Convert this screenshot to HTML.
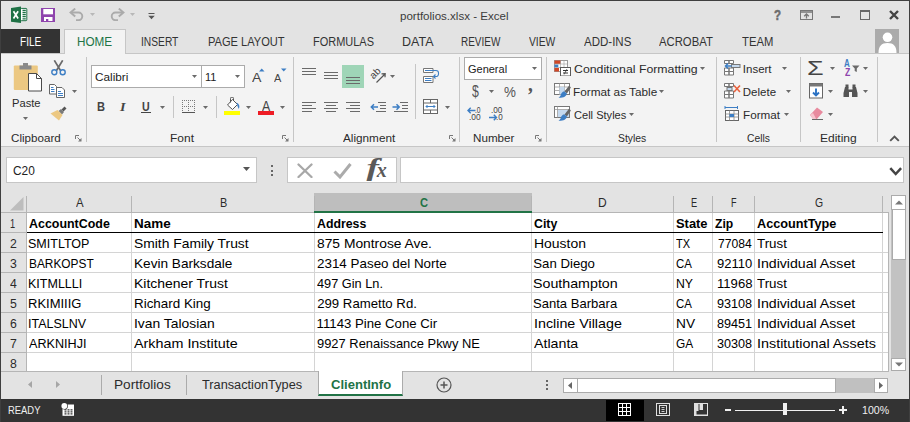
<!DOCTYPE html><html><head><meta charset="utf-8"><title>portfolios.xlsx - Excel</title><style>html,body{margin:0;padding:0}body{width:910px;height:422px;overflow:hidden;position:relative;background:#e3e3e3;font-family:"Liberation Sans", sans-serif}div,svg,span{position:absolute;box-sizing:border-box}span{white-space:pre;line-height:24px;transform-origin:0 0}</style></head><body>
<svg style="left:11px;top:6px" width="17" height="18" viewBox="0 0 17 18"><rect x="9.500" y="2.400" width="6.300" height="12.300" rx="0.800" fill="#fff" stroke="#1e7145" stroke-width="1"/>
<path d="M11.500 4.300h3.300M11.500 6.500h3.300M11.500 8.600h3.300M11.500 10.700h3.300M11.500 12.800h3.300" stroke="#1e7145" stroke-width="1.300"/>
<path d="M0 1.900L10 0.600v16.500L0 15.800z" fill="#1e7145"/>
<path d="M2.500 5.300l4.600 7.200M7.100 5.300l-4.600 7.200" stroke="#fff" stroke-width="1.700"/></svg>
<svg style="left:41px;top:8px" width="14" height="14" viewBox="0 0 14 14"><path d="M0 0h14v14H0z" fill="#8f44ad"/><rect x="2.300" y="1" width="9.700" height="5.300" fill="#fff"/><rect x="3" y="9" width="8.500" height="4" fill="#fff"/><rect x="5" y="11" width="2.300" height="2" fill="#8f44ad"/></svg>
<svg style="left:69px;top:8px" width="16" height="13" viewBox="0 0 16 13"><path d="M2 4.500h7.500a3.800 3.800 0 0 1 0 7.600h-2.500" fill="none" stroke="#ababab" stroke-width="1.900"/><path d="M6.200 0.600L1.600 4.500l4.600 3.900" fill="none" stroke="#ababab" stroke-width="2"/></svg>
<svg style="left:90px;top:13px" width="5" height="3" viewBox="0 0 5 3"><path d="M0 0h5L2.500 3z" fill="#b8b8b8"/></svg>
<svg style="left:109px;top:8px" width="16" height="13" viewBox="0 0 16 13"><path d="M14 4.500h-7.500a3.800 3.800 0 0 0 0 7.600h2.500" fill="none" stroke="#ababab" stroke-width="1.900"/><path d="M9.800 0.600l4.600 3.900-4.600 3.900" fill="none" stroke="#ababab" stroke-width="2"/></svg>
<svg style="left:130px;top:13px" width="5" height="3" viewBox="0 0 5 3"><path d="M0 0h5L2.500 3z" fill="#b8b8b8"/></svg>
<svg style="left:148px;top:12px" width="7" height="8" viewBox="0 0 7 8"><path d="M0.500 1.500h6" stroke="#555" stroke-width="1"/><path d="M0.300 3.800h6.400L3.500 7.200z" fill="#555"/></svg>
<svg style="left:800px;top:10px" width="13" height="10" viewBox="0 0 13 10"><rect x="0.500" y="0.500" width="12" height="9" fill="none" stroke="#777"/><path d="M0.500 2h12" stroke="#777" stroke-width="1.500"/><path d="M6.500 8.500v-4.500M4.200 6.300L6.500 4l2.300 2.300" fill="none" stroke="#777" stroke-width="1.300"/></svg>
<div style="left:831px;top:16px;width:9px;height:2px;background:#777;"></div>
<svg style="left:860px;top:10px" width="10" height="10" viewBox="0 0 10 10"><rect x="0.500" y="1" width="9" height="8.500" fill="none" stroke="#666"/><path d="M0 1h10" stroke="#666" stroke-width="2"/></svg>
<svg style="left:889px;top:10px" width="10" height="10" viewBox="0 0 10 10"><path d="M1 1l8 8M9 1l-8 8" stroke="#444" stroke-width="2.400"/></svg>
<div style="left:1px;top:29px;width:59px;height:25px;background:#333;"></div>
<div style="left:0px;top:53px;width:910px;height:1px;background:#c6c6c6;"></div>
<div style="left:64px;top:29px;width:62px;height:25px;background:#f3f3f3;border:1px solid #c6c6c6;border-bottom:none"></div>
<div style="left:875px;top:29px;width:24px;height:24px;background:#ababab;"></div>
<svg style="left:875px;top:29px" width="24" height="24" viewBox="0 0 24 24"><circle cx="12.500" cy="8.300" r="4.800" fill="#fff"/><path d="M3.500 24c0-7 3-10 9-10s9 3 9 10z" fill="#fff"/></svg>
<div style="left:1px;top:54px;width:909px;height:92px;background:#f3f3f3;"></div>
<div style="left:0px;top:146px;width:910px;height:1px;background:#c6c6c6;"></div>
<div style="left:86px;top:57px;width:1px;height:85px;background:#c6c6c6;"></div>
<div style="left:293px;top:57px;width:1px;height:85px;background:#c6c6c6;"></div>
<div style="left:415px;top:64px;width:1px;height:55px;background:#c6c6c6;"></div>
<div style="left:459px;top:57px;width:1px;height:85px;background:#c6c6c6;"></div>
<div style="left:546px;top:57px;width:1px;height:85px;background:#c6c6c6;"></div>
<div style="left:716px;top:57px;width:1px;height:85px;background:#c6c6c6;"></div>
<div style="left:800px;top:57px;width:1px;height:85px;background:#c6c6c6;"></div>
<div style="left:877px;top:57px;width:1px;height:85px;background:#c6c6c6;"></div>
<svg style="left:75px;top:135px" width="7" height="7" viewBox="0 0 7 7"><path d="M0.500 4V0.500H4" fill="none" stroke="#777"/><path d="M2.500 2.500l3 3" stroke="#777"/><path d="M6.500 3v3.500H3z" fill="#777"/></svg>
<svg style="left:282px;top:135px" width="7" height="7" viewBox="0 0 7 7"><path d="M0.500 4V0.500H4" fill="none" stroke="#777"/><path d="M2.500 2.500l3 3" stroke="#777"/><path d="M6.500 3v3.500H3z" fill="#777"/></svg>
<svg style="left:449px;top:135px" width="7" height="7" viewBox="0 0 7 7"><path d="M0.500 4V0.500H4" fill="none" stroke="#777"/><path d="M2.500 2.500l3 3" stroke="#777"/><path d="M6.500 3v3.500H3z" fill="#777"/></svg>
<svg style="left:535px;top:135px" width="7" height="7" viewBox="0 0 7 7"><path d="M0.500 4V0.500H4" fill="none" stroke="#777"/><path d="M2.500 2.500l3 3" stroke="#777"/><path d="M6.500 3v3.500H3z" fill="#777"/></svg>
<svg style="left:13px;top:62px" width="30" height="30" viewBox="0 0 30 30"><rect x="0.800" y="3.600" width="24" height="24.400" rx="1" fill="#ecc882"/>
<path d="M6.500 7.500v-4h3.500v-2.500h5v2.500h3.500v4z" fill="#8a8a8a"/>
<path d="M15.500 11.500h8l5 5v12.500h-13z" fill="#fff" stroke="#4a4a4a"/><path d="M23.500 11.500v5h5" fill="none" stroke="#4a4a4a"/></svg>
<svg style="left:23px;top:117px" width="5" height="3" viewBox="0 0 5 3"><path d="M0 0h5L2.500 3z" fill="#6a6a6a"/></svg>
<svg style="left:51px;top:60px" width="15" height="16" viewBox="0 0 15 16"><path d="M3.300 0.300l6.200 10.200M11.700 0.300l-6.200 10.200" stroke="#6a6a6a" stroke-width="1.700"/>
<circle cx="3.300" cy="12.300" r="2.500" fill="none" stroke="#3d7ec4" stroke-width="1.400"/><circle cx="11.700" cy="12.300" r="2.500" fill="none" stroke="#3d7ec4" stroke-width="1.400"/></svg>
<svg style="left:49px;top:84px" width="17" height="14" viewBox="0 0 17 14"><path d="M0.500 0.500h5l2 2v7.500h-7z" fill="#fff" stroke="#666"/><path d="M2 3.500h2.500M2 5.500h3.500M2 7.500h3.500" stroke="#3d7ec4"/>
<path d="M7.500 3.500h5.500l2.500 2.500v7.500h-8z" fill="#fff" stroke="#666"/><path d="M9 7.500h3M9 9.500h5M9 11.500h5" stroke="#3d7ec4"/></svg>
<svg style="left:72px;top:90px" width="5" height="3" viewBox="0 0 5 3"><path d="M0 0h5L2.500 3z" fill="#6a6a6a"/></svg>
<svg style="left:50px;top:106px" width="17" height="15" viewBox="0 0 17 15"><path d="M11.500 3.500l3-3 2 2-3 3z" fill="#555"/><path d="M8.500 5l2.500-2 3 3-2 2.500z" fill="#7a7a7a"/><path d="M0.500 7.500l7-3.500 5 5-3.500 5.500z" fill="#ecc882"/></svg>
<div style="left:91px;top:65px;width:154px;height:23px;background:#fff;border:1px solid #ababab"></div>
<div style="left:201px;top:65px;width:1px;height:23px;background:#ababab;"></div>
<svg style="left:192px;top:75px" width="5" height="3" viewBox="0 0 5 3"><path d="M0 0h5L2.500 3z" fill="#6a6a6a"/></svg>
<svg style="left:235px;top:75px" width="5" height="3" viewBox="0 0 5 3"><path d="M0 0h5L2.500 3z" fill="#6a6a6a"/></svg>
<svg style="left:259px;top:68px" width="6" height="4" viewBox="0 0 6 4"><path d="M0 3.500h5.500L2.750 0.500z" fill="#3d7ec4"/></svg>
<svg style="left:281px;top:68px" width="6" height="4" viewBox="0 0 6 4"><path d="M0 0.500h5.500L2.750 3.500z" fill="#3d7ec4"/></svg>
<div style="left:141px;top:112px;width:10px;height:1px;background:#444;"></div>
<svg style="left:160px;top:106px" width="5" height="3" viewBox="0 0 5 3"><path d="M0 0h5L2.500 3z" fill="#6a6a6a"/></svg>
<div style="left:173px;top:96px;width:1px;height:22px;background:#c6c6c6;"></div>
<svg style="left:182px;top:100px" width="14" height="14" viewBox="0 0 14 14"><path d="M0.500 0v12M6.500 0v12M12.500 0v12M0 0.500h13M0 6.500h13" stroke="#7a7a7a" stroke-dasharray="1 1"/><path d="M0 12.500h13" stroke="#555"/></svg>
<svg style="left:203px;top:106px" width="5" height="3" viewBox="0 0 5 3"><path d="M0 0h5L2.500 3z" fill="#6a6a6a"/></svg>
<div style="left:216px;top:96px;width:1px;height:22px;background:#c6c6c6;"></div>
<svg style="left:224px;top:97px" width="17" height="18" viewBox="0 0 17 18"><rect x="0" y="14" width="16" height="4" fill="#ffff00"/>
<path d="M3.500 8l5-5.500 5 5-5 5z" fill="#fff" stroke="#555"/><path d="M6.500 5.500V1.500a1.500 1.500 0 0 1 3 0V3" fill="none" stroke="#555"/><path d="M12.500 5.500c2.800 1.200 3.600 3.800 2.300 6.500-0.800-1.500-1.500-3-2.300-6.500z" fill="#3d7ec4"/></svg>
<svg style="left:246px;top:106px" width="5" height="3" viewBox="0 0 5 3"><path d="M0 0h5L2.500 3z" fill="#6a6a6a"/></svg>
<div style="left:258px;top:111px;width:16px;height:4px;background:#ee1c25;"></div>
<svg style="left:280px;top:106px" width="5" height="3" viewBox="0 0 5 3"><path d="M0 0h5L2.500 3z" fill="#6a6a6a"/></svg>
<svg style="left:302px;top:68px" width="14" height="9" viewBox="0 0 14 9"><rect x="0" y="0" width="14" height="1" fill="#6a6a6a"/><rect x="0" y="3" width="14" height="1" fill="#6a6a6a"/><rect x="0" y="6" width="14" height="1" fill="#6a6a6a"/></svg>
<svg style="left:324px;top:72px" width="14" height="9" viewBox="0 0 14 9"><rect x="0" y="0" width="14" height="1" fill="#6a6a6a"/><rect x="0" y="3" width="14" height="1" fill="#6a6a6a"/><rect x="0" y="6" width="14" height="1" fill="#6a6a6a"/></svg>
<div style="left:342px;top:65px;width:22px;height:23px;background:#9fd5b7;"></div>
<svg style="left:346px;top:77px" width="14" height="9" viewBox="0 0 14 9"><rect x="0" y="0" width="14" height="1" fill="#6a6a6a"/><rect x="0" y="3" width="14" height="1" fill="#6a6a6a"/><rect x="0" y="6" width="14" height="1" fill="#6a6a6a"/></svg>
<svg style="left:368px;top:66px" width="20" height="20" viewBox="0 0 20 20"><path d="M8.500 16.500L17 8M13.500 7.800l3.700-0.200-0.200 3.700" fill="none" stroke="#555" stroke-width="1.200"/><text x="0" y="0" transform="translate(5.500 13.500) rotate(-45)" font-family="Liberation Sans, sans-serif" font-size="10" fill="#444">ab</text></svg>
<svg style="left:390px;top:75px" width="5" height="3" viewBox="0 0 5 3"><path d="M0 0h5L2.500 3z" fill="#6a6a6a"/></svg>
<svg style="left:423px;top:68px" width="17" height="15" viewBox="0 0 17 15"><path d="M0.500 0.500h9.500v4h-9.500zM0.500 8.500h9.500v6h-9.500z" fill="#fff" stroke="#777"/><path d="M2 2.500h9.500M2 10.500h6.500M2 12.500h6.500" stroke="#3d7ec4"/><path d="M11 2.500h2a2.500 2.500 0 0 1 2.500 2.500v1a2.500 2.500 0 0 1-2.500 2.500h-2M12.500 6.500l-2 2 2 2" fill="none" stroke="#3d7ec4" stroke-width="1.100"/></svg>
<svg style="left:302px;top:102px" width="14" height="12" viewBox="0 0 14 12"><rect x="0" y="0" width="14" height="1" fill="#6a6a6a"/><rect x="0" y="3" width="10" height="1" fill="#6a6a6a"/><rect x="0" y="6" width="14" height="1" fill="#6a6a6a"/><rect x="0" y="9" width="10" height="1" fill="#6a6a6a"/></svg>
<svg style="left:324px;top:102px" width="14" height="12" viewBox="0 0 14 12"><rect x="0.0" y="0" width="14" height="1" fill="#6a6a6a"/><rect x="2.0" y="3" width="10" height="1" fill="#6a6a6a"/><rect x="0.0" y="6" width="14" height="1" fill="#6a6a6a"/><rect x="2.0" y="9" width="10" height="1" fill="#6a6a6a"/></svg>
<svg style="left:346px;top:102px" width="14" height="12" viewBox="0 0 14 12"><rect x="0" y="0" width="14" height="1" fill="#6a6a6a"/><rect x="4" y="3" width="10" height="1" fill="#6a6a6a"/><rect x="0" y="6" width="14" height="1" fill="#6a6a6a"/><rect x="4" y="9" width="10" height="1" fill="#6a6a6a"/></svg>
<svg style="left:370px;top:102px" width="16" height="10" viewBox="0 0 16 10"><path d="M8 0.500h8M10 3.500h6M10 6.500h6M6 9.500h10" stroke="#6a6a6a"/><path d="M8 5H1.500M4 2.300L1.300 5 4 7.700" fill="none" stroke="#3d7ec4" stroke-width="1.500"/></svg>
<svg style="left:392px;top:102px" width="16" height="10" viewBox="0 0 16 10"><path d="M8 0.500h8M10 3.500h6M10 6.500h6M2 9.500h14" stroke="#6a6a6a"/><path d="M0.500 5H7M4.500 2.300L7.200 5 4.500 7.700" fill="none" stroke="#3d7ec4" stroke-width="1.500"/></svg>
<svg style="left:423px;top:99px" width="15" height="15" viewBox="0 0 15 15"><rect x="0.500" y="0.500" width="14" height="14" fill="#fff" stroke="#666"/><path d="M0.500 4h14M0.500 11h14M7.500 0.500v3.500M7.500 11v3.500" stroke="#666"/><path d="M3 7.500h9M4.500 6L3 7.500 4.500 9M10.500 6l1.500 1.500L10.500 9" fill="none" stroke="#3d7ec4"/></svg>
<svg style="left:445px;top:106px" width="5" height="3" viewBox="0 0 5 3"><path d="M0 0h5L2.500 3z" fill="#6a6a6a"/></svg>
<div style="left:464px;top:57px;width:78px;height:23px;background:#fff;border:1px solid #ababab"></div>
<svg style="left:532px;top:67px" width="5" height="3" viewBox="0 0 5 3"><path d="M0 0h5L2.500 3z" fill="#6a6a6a"/></svg>
<svg style="left:489px;top:90px" width="5" height="3" viewBox="0 0 5 3"><path d="M0 0h5L2.500 3z" fill="#6a6a6a"/></svg>
<svg style="left:467px;top:106.5px" width="9" height="7" viewBox="0 0 9 7"><path d="M8.500 3.500H1M3.700 0.800L1 3.500l2.700 2.700" fill="none" stroke="#3d7ec4" stroke-width="1.400"/></svg>
<svg style="left:489px;top:114px" width="9" height="7" viewBox="0 0 9 7"><path d="M0 3.500h7.500M4.800 0.800L7.500 3.500 4.800 6.200" fill="none" stroke="#3d7ec4" stroke-width="1.400"/></svg>
<svg style="left:554px;top:60px" width="17" height="16" viewBox="0 0 17 16"><rect x="0.500" y="0.500" width="13" height="11" fill="#fff" stroke="#999"/><rect x="0.500" y="0.500" width="6.500" height="3.500" fill="#d24726"/><rect x="0.500" y="4.500" width="3.800" height="3" fill="#3d7ec4"/><rect x="0.500" y="8" width="4.500" height="3.500" fill="#d24726"/><path d="M6.500 0.500v11M10 0.500v11M0.500 4h13M0.500 7.500h13" stroke="#aaa" stroke-width="0.700"/>
<rect x="6.500" y="7.500" width="10" height="8.500" fill="#fff" stroke="#5a5a5a"/><path d="M9 10.500h5M9 13h5" stroke="#333" stroke-width="1"/><path d="M12.800 9.200l-2.600 5.200" stroke="#333" stroke-width="0.800"/></svg>
<svg style="left:700px;top:67px" width="5" height="3" viewBox="0 0 5 3"><path d="M0 0h5L2.500 3z" fill="#6a6a6a"/></svg>
<svg style="left:554px;top:83px" width="17" height="17" viewBox="0 0 17 17"><rect x="0.500" y="0.500" width="15" height="11" fill="#fff" stroke="#777"/><path d="M0.500 4h15M0.500 7.500h15M5.500 0.500v11M10.500 0.500v11" stroke="#999" stroke-width="0.800"/><rect x="5.500" y="4" width="5" height="7.500" fill="#c5d9ee"/><path d="M15.200 2.600l1.700 1.800-4 6-2.400-1.800z" fill="#666"/><path d="M10.500 8.600l2.400 1.800c-0.300 2.600-3.500 4.600-8.400 4.400 2-1.200 2.300-2.800 2.800-4.200 0.900-1.600 2.100-2.200 3.200-2z" fill="#3d7ec4"/></svg>
<svg style="left:659px;top:90px" width="5" height="3" viewBox="0 0 5 3"><path d="M0 0h5L2.500 3z" fill="#6a6a6a"/></svg>
<svg style="left:554px;top:106px" width="17" height="17" viewBox="0 0 17 17"><rect x="0.500" y="0.500" width="15" height="11" fill="#fff" stroke="#777"/><path d="M0.500 3.500h15M3.500 0.500v11" stroke="#999" stroke-width="0.800"/><rect x="4" y="4" width="11" height="7" fill="#c5d9ee"/><path d="M15.200 2.600l1.700 1.800-4 6-2.400-1.800z" fill="#666"/><path d="M10.500 8.600l2.400 1.800c-0.300 2.600-3.500 4.600-8.400 4.400 2-1.200 2.300-2.800 2.800-4.200 0.900-1.600 2.100-2.200 3.200-2z" fill="#3d7ec4"/></svg>
<svg style="left:629px;top:113px" width="5" height="3" viewBox="0 0 5 3"><path d="M0 0h5L2.500 3z" fill="#6a6a6a"/></svg>
<svg style="left:724px;top:60px" width="17" height="16" viewBox="0 0 17 16"><path d="M0.500 0.500h4.500v3h-4.500zM5 0.500h4.500v3H5zM0.500 8h4.500v3.500h-4.500zM5 8h4.500v3.500H5zM0.500 11.500h4.500v3.500h-4.500zM5 11.500h4.500v3.500H5z" fill="#fff" stroke="#777"/><rect x="7.500" y="4.500" width="8.500" height="3" fill="#c5d9ee" stroke="#777"/><path d="M7.500 6H1.500M4 3.500L1.500 6 4 8.500" fill="none" stroke="#3d7ec4" stroke-width="1.500"/></svg>
<svg style="left:782px;top:67px" width="5" height="3" viewBox="0 0 5 3"><path d="M0 0h5L2.500 3z" fill="#6a6a6a"/></svg>
<svg style="left:724px;top:83px" width="17" height="16" viewBox="0 0 17 16"><path d="M0.500 0.500h4.500v3h-4.500zM5 0.500h4.500v3H5zM0.500 8h4.500v3.500h-4.500zM5 8h4.500v3.500H5zM0.500 11.500h4.500v3.500h-4.500zM5 11.500h4.500v3.500H5z" fill="#fff" stroke="#777"/><rect x="3" y="4.500" width="5" height="3" fill="#c5d9ee" stroke="#777"/><path d="M10 2.500l6 6.500M16 2.500l-6 6.500" stroke="#e8603c" stroke-width="1.600"/></svg>
<svg style="left:786px;top:90px" width="5" height="3" viewBox="0 0 5 3"><path d="M0 0h5L2.500 3z" fill="#6a6a6a"/></svg>
<svg style="left:724px;top:106px" width="17" height="16" viewBox="0 0 17 16"><path d="M1 1.500h12.500M1 0v3M13.500 0v3" stroke="#3d7ec4"/><rect x="1.500" y="4.500" width="13" height="10" fill="#fff" stroke="#666"/><path d="M1.500 8h13M1.500 11h13M5.500 4.500v10M10 4.500v10" stroke="#888" stroke-width="0.800"/><rect x="5.500" y="8" width="4.500" height="3" fill="#3d7ec4"/></svg>
<svg style="left:784px;top:113px" width="5" height="3" viewBox="0 0 5 3"><path d="M0 0h5L2.500 3z" fill="#6a6a6a"/></svg>
<svg style="left:830px;top:67px" width="5" height="3" viewBox="0 0 5 3"><path d="M0 0h5L2.500 3z" fill="#6a6a6a"/></svg>
<svg style="left:852px;top:65px" width="8" height="8" viewBox="0 0 8 8"><path d="M0 0.500h7.500L4.800 3.500V7L2.700 6V3.500z" fill="#6a6a6a"/></svg>
<svg style="left:863px;top:67px" width="5" height="3" viewBox="0 0 5 3"><path d="M0 0h5L2.500 3z" fill="#6a6a6a"/></svg>
<svg style="left:809px;top:83px" width="14" height="16" viewBox="0 0 14 16"><rect x="0.500" y="0.500" width="13" height="14.500" fill="#fff" stroke="#666"/><path d="M0.500 2h13" stroke="#777" stroke-width="3"/><path d="M7 5.500v7M4 9.500l3 3 3-3" fill="none" stroke="#2b72c4" stroke-width="1.900"/></svg>
<svg style="left:828px;top:90px" width="5" height="3" viewBox="0 0 5 3"><path d="M0 0h5L2.500 3z" fill="#6a6a6a"/></svg>
<svg style="left:843px;top:84px" width="15" height="13" viewBox="0 0 15 13"><path d="M2 3h3.500v2.500h4V3H13l1.500 6v4h-5.500V8h-3v5H0.500V9z" fill="#555"/><rect x="2.500" y="0.500" width="3" height="3" fill="#555"/><rect x="9.500" y="0.500" width="3" height="3" fill="#555"/></svg>
<svg style="left:863px;top:90px" width="5" height="3" viewBox="0 0 5 3"><path d="M0 0h5L2.500 3z" fill="#6a6a6a"/></svg>
<svg style="left:809px;top:107px" width="15" height="13" viewBox="0 0 15 13"><path d="M1 8l7-7.500 6 4.500-6.500 7.500h-3z" fill="#e88a9e"/><path d="M1 8l3.500 4.500h3L4 6z" fill="#f6c3cd"/><path d="M3 12.500h11" stroke="#666"/></svg>
<svg style="left:828px;top:113px" width="5" height="3" viewBox="0 0 5 3"><path d="M0 0h5L2.500 3z" fill="#6a6a6a"/></svg>
<svg style="left:889px;top:135px" width="11" height="7" viewBox="0 0 11 7"><path d="M1.200 5.800l4.300-4.300 4.300 4.300" fill="none" stroke="#555" stroke-width="1.900"/></svg>
<div style="left:6px;top:157px;width:251px;height:26px;background:#fff;border:1px solid #c6c6c6"></div>
<svg style="left:243px;top:167px" width="7" height="4" viewBox="0 0 7 4"><path d="M0 0h7L3.500 4z" fill="#555"/></svg>
<div style="left:271px;top:165px;width:2px;height:2px;background:#666;"></div>
<div style="left:271px;top:170px;width:2px;height:2px;background:#666;"></div>
<div style="left:271px;top:174px;width:2px;height:2px;background:#666;"></div>
<div style="left:287px;top:157px;width:110px;height:26px;background:#fff;border:1px solid #c6c6c6"></div>
<svg style="left:297px;top:163px" width="16" height="15" viewBox="0 0 16 15"><path d="M1.500 1.500l13 12.500M14.500 1.500L1.500 14" stroke="#a8a8a8" stroke-width="2.300" stroke-linecap="round"/></svg>
<svg style="left:333px;top:162px" width="19" height="17" viewBox="0 0 19 17"><path d="M1.500 9.500l5.500 5.500L17.500 2" fill="none" stroke="#ababab" stroke-width="3"/></svg>
<div style="left:400px;top:157px;width:504px;height:26px;background:#fff;border:1px solid #c6c6c6"></div>
<svg style="left:889px;top:166px" width="14" height="11" viewBox="0 0 14 11"><path d="M1.300 2.200l5.400 5.800 5.400-5.800" fill="none" stroke="#444" stroke-width="2.500"/></svg>
<div style="left:1px;top:193px;width:887px;height:178px;background:#fff;"></div>
<div style="left:1px;top:193px;width:887px;height:19px;background:#e3e3e3;"></div>
<div style="left:1px;top:193px;width:26px;height:178px;background:#e3e3e3;"></div>
<div style="left:314px;top:193px;width:218px;height:19px;background:#bebebe;"></div>
<svg style="left:9px;top:197px" width="15" height="14" viewBox="0 0 15 14"><path d="M14.500 0v13.500H1z" fill="#bdbdbd"/></svg>
<div style="left:26px;top:196px;width:1px;height:16px;background:#b5b5b5;"></div>
<div style="left:26px;top:212px;width:1px;height:159px;background:#b5b5b5;"></div>
<div style="left:131px;top:196px;width:1px;height:16px;background:#b5b5b5;"></div>
<div style="left:131px;top:212px;width:1px;height:159px;background:#d4d4d4;"></div>
<div style="left:314px;top:196px;width:1px;height:16px;background:#b5b5b5;"></div>
<div style="left:314px;top:212px;width:1px;height:159px;background:#d4d4d4;"></div>
<div style="left:531px;top:196px;width:1px;height:16px;background:#b5b5b5;"></div>
<div style="left:531px;top:212px;width:1px;height:159px;background:#d4d4d4;"></div>
<div style="left:673px;top:196px;width:1px;height:16px;background:#b5b5b5;"></div>
<div style="left:673px;top:212px;width:1px;height:159px;background:#d4d4d4;"></div>
<div style="left:712px;top:196px;width:1px;height:16px;background:#b5b5b5;"></div>
<div style="left:712px;top:212px;width:1px;height:159px;background:#d4d4d4;"></div>
<div style="left:754px;top:196px;width:1px;height:16px;background:#b5b5b5;"></div>
<div style="left:754px;top:212px;width:1px;height:159px;background:#d4d4d4;"></div>
<div style="left:882px;top:196px;width:1px;height:16px;background:#b5b5b5;"></div>
<div style="left:882px;top:212px;width:1px;height:159px;background:#d4d4d4;"></div>
<div style="left:1px;top:212px;width:26px;height:1px;background:#b5b5b5;"></div>
<div style="left:27px;top:212px;width:861px;height:1px;background:#d4d4d4;"></div>
<div style="left:1px;top:232px;width:26px;height:1px;background:#b5b5b5;"></div>
<div style="left:1px;top:252px;width:26px;height:1px;background:#b5b5b5;"></div>
<div style="left:27px;top:252px;width:861px;height:1px;background:#d4d4d4;"></div>
<div style="left:1px;top:272px;width:26px;height:1px;background:#b5b5b5;"></div>
<div style="left:27px;top:272px;width:861px;height:1px;background:#d4d4d4;"></div>
<div style="left:1px;top:292px;width:26px;height:1px;background:#b5b5b5;"></div>
<div style="left:27px;top:292px;width:861px;height:1px;background:#d4d4d4;"></div>
<div style="left:1px;top:312px;width:26px;height:1px;background:#b5b5b5;"></div>
<div style="left:27px;top:312px;width:861px;height:1px;background:#d4d4d4;"></div>
<div style="left:1px;top:332px;width:26px;height:1px;background:#b5b5b5;"></div>
<div style="left:27px;top:332px;width:861px;height:1px;background:#d4d4d4;"></div>
<div style="left:1px;top:352px;width:26px;height:1px;background:#b5b5b5;"></div>
<div style="left:27px;top:352px;width:861px;height:1px;background:#d4d4d4;"></div>
<div style="left:27px;top:212px;width:287px;height:1px;background:#b5b5b5;"></div>
<div style="left:532px;top:212px;width:356px;height:1px;background:#b5b5b5;"></div>
<div style="left:27px;top:232px;width:856px;height:1px;background:#000;"></div>
<div style="left:888px;top:212px;width:1px;height:160px;background:#b5b5b5;"></div>
<div style="left:1px;top:371px;width:888px;height:1px;background:#b5b5b5;"></div>
<div style="left:891px;top:195px;width:15px;height:176px;background:#c2c2c2;"></div>
<div style="left:891px;top:195px;width:15px;height:15px;background:#fff;border:1px solid #ababab"></div>
<svg style="left:895px;top:200px" width="8" height="5" viewBox="0 0 8 5"><path d="M0 4.500h8L4 0.500z" fill="#777"/></svg>
<div style="left:892px;top:210px;width:14px;height:50px;background:#fff;border-left:1px solid #ababab;border-right:1px solid #ababab;border-bottom:1px solid #ababab"></div>
<div style="left:891px;top:358px;width:15px;height:13px;background:#fff;border:1px solid #ababab"></div>
<svg style="left:895px;top:362px" width="8" height="5" viewBox="0 0 8 5"><path d="M0 0.500h8L4 4.500z" fill="#777"/></svg>
<svg style="left:28px;top:381px" width="4" height="7" viewBox="0 0 4 7"><path d="M4 0v7L0 3.500z" fill="#a6a6a6"/></svg>
<svg style="left:56px;top:381px" width="4" height="7" viewBox="0 0 4 7"><path d="M0 0v7l4-3.500z" fill="#a6a6a6"/></svg>
<div style="left:101px;top:375px;width:1px;height:20px;background:#ababab;"></div>
<div style="left:186px;top:375px;width:1px;height:20px;background:#ababab;"></div>
<div style="left:318px;top:371px;width:85px;height:25px;background:#fff;border-left:1px solid #ababab;border-right:1px solid #ababab;border-bottom:2px solid #217346"></div>
<svg style="left:436px;top:377px" width="16" height="16" viewBox="0 0 16 16"><circle cx="8" cy="8" r="7" fill="none" stroke="#555" stroke-width="1.200"/><path d="M4.500 8h7M8 4.500v7" stroke="#555" stroke-width="1.500"/></svg>
<div style="left:546px;top:380px;width:2px;height:2px;background:#666;"></div>
<div style="left:546px;top:384px;width:2px;height:2px;background:#666;"></div>
<div style="left:546px;top:388px;width:2px;height:2px;background:#666;"></div>
<div style="left:563px;top:378px;width:325px;height:15px;background:#c0c0c0;"></div>
<div style="left:563px;top:378px;width:15px;height:15px;background:#fff;border:1px solid #ababab"></div>
<svg style="left:568px;top:382px" width="4" height="7" viewBox="0 0 4 7"><path d="M4 0v7L0 3.500z" fill="#666"/></svg>
<div style="left:578px;top:378px;width:258px;height:15px;background:#fff;border:1px solid #ababab;border-left:none"></div>
<div style="left:874px;top:378px;width:14px;height:15px;background:#fff;border:1px solid #ababab"></div>
<svg style="left:879px;top:382px" width="4" height="7" viewBox="0 0 4 7"><path d="M0 0v7l4-3.500z" fill="#666"/></svg>
<div style="left:0px;top:399px;width:910px;height:23px;background:#333;"></div>
<svg style="left:61px;top:402px" width="13" height="14" viewBox="0 0 13 14"><rect x="1.500" y="2.500" width="11.500" height="11.300" fill="#fff"/><path d="M3.500 7.800h2M6.500 7.800h2M9.500 7.800h2M3.500 9.800h2M6.500 9.800h2M9.500 9.800h2M3.500 11.800h2M6.500 11.800h2M9.500 11.800h2" stroke="#333" stroke-width="1.200"/><circle cx="3.300" cy="4" r="3.600" fill="#333"/><circle cx="3.300" cy="4" r="2.900" fill="#fff"/></svg>
<div style="left:606px;top:400px;width:38px;height:21px;background:#000;"></div>
<svg style="left:618px;top:403px" width="13" height="13" viewBox="0 0 13 13"><rect x="0.500" y="0.500" width="12" height="12" fill="none" stroke="#fff"/><path d="M4.500 0v13M8.500 0v13M0 4.500h13M0 8.500h13" stroke="#fff"/></svg>
<svg style="left:656px;top:403px" width="14" height="13" viewBox="0 0 14 13"><rect x="0.500" y="0.500" width="13" height="12" fill="none" stroke="#e0e0e0"/><rect x="3.500" y="2.500" width="7" height="8" fill="none" stroke="#e0e0e0"/><path d="M5.500 4.500h3M5.500 6.500h3M5.500 8.500h3" stroke="#e0e0e0" stroke-width="0.900"/></svg>
<svg style="left:694px;top:403px" width="14" height="13" viewBox="0 0 14 13"><rect x="0.500" y="0.500" width="13" height="12" fill="none" stroke="#e0e0e0"/><rect x="1" y="1" width="3.500" height="7" fill="#e0e0e0"/><rect x="5.500" y="1" width="3.500" height="6" fill="#e0e0e0"/><path d="M1.500 8v4.500h12" fill="none" stroke="#e0e0e0" stroke-width="2"/></svg>
<div style="left:725px;top:409px;width:6px;height:2px;background:#f0f0f0;"></div>
<div style="left:735px;top:410px;width:100px;height:1px;background:#f0f0f0;"></div>
<div style="left:783px;top:403px;width:4px;height:12px;background:#f0f0f0;"></div>
<div style="left:839px;top:409px;width:8px;height:2px;background:#f0f0f0;"></div>
<div style="left:842px;top:406px;width:2px;height:8px;background:#f0f0f0;"></div>
<span style="left:399.80px;top:4.00px;font-size:11.8px;color:#3b3b3b;transform:scaleX(0.9791);">portfolios.xlsx - Excel</span>
<span style="left:774.20px;top:3.00px;font-size:14px;color:#6e6e6e;font-weight:700;transform:scaleX(0.8250);-webkit-text-stroke:0.5px #6e6e6e;">?</span>
<span style="left:19.76px;top:30.00px;font-size:12px;color:#fff;transform:scaleX(0.8375);">FILE</span>
<span style="left:76.62px;top:30.00px;font-size:12px;color:#217346;transform:scaleX(0.9771);">HOME</span>
<span style="left:140.85px;top:30.00px;font-size:12px;color:#333;transform:scaleX(0.8535);">INSERT</span>
<span style="left:207.78px;top:30.00px;font-size:12px;color:#333;transform:scaleX(0.9244);">PAGE LAYOUT</span>
<span style="left:312.68px;top:30.00px;font-size:12px;color:#333;transform:scaleX(0.9152);">FORMULAS</span>
<span style="left:401.56px;top:30.00px;font-size:12px;color:#333;transform:scaleX(1.0414);">DATA</span>
<span style="left:460.87px;top:30.00px;font-size:12px;color:#333;transform:scaleX(0.8298);">REVIEW</span>
<span style="left:529.40px;top:30.00px;font-size:12px;color:#333;transform:scaleX(0.8581);">VIEW</span>
<span style="left:584.10px;top:30.00px;font-size:12px;color:#333;transform:scaleX(0.9592);">ADD-INS</span>
<span style="left:659.00px;top:30.00px;font-size:12px;color:#333;transform:scaleX(0.9421);">ACROBAT</span>
<span style="left:741.50px;top:30.00px;font-size:12px;color:#333;transform:scaleX(0.9394);">TEAM</span>
<span style="left:10.80px;top:126.00px;font-size:11.5px;color:#2b2b2b;transform:scaleX(1.0102);">Clipboard</span>
<span style="left:170.06px;top:126.00px;font-size:11.5px;color:#2b2b2b;transform:scaleX(1.0409);">Font</span>
<span style="left:342.50px;top:126.00px;font-size:11.5px;color:#2b2b2b;transform:scaleX(1.0216);">Alignment</span>
<span style="left:473.49px;top:126.00px;font-size:11.5px;color:#2b2b2b;transform:scaleX(1.0125);">Number</span>
<span style="left:617.50px;top:126.00px;font-size:11.5px;color:#2b2b2b;transform:scaleX(0.9000);">Styles</span>
<span style="left:747.00px;top:126.00px;font-size:11.5px;color:#2b2b2b;transform:scaleX(0.8960);">Cells</span>
<span style="left:819.86px;top:126.00px;font-size:11.5px;color:#2b2b2b;transform:scaleX(1.0441);">Editing</span>
<span style="left:11.63px;top:91.00px;font-size:11.5px;color:#2b2b2b;transform:scaleX(0.9714);">Paste</span>
<span style="left:94.80px;top:65.00px;font-size:11.5px;color:#222;transform:scaleX(1.0219);">Calibri</span>
<span style="left:204.75px;top:65.00px;font-size:11.5px;color:#222;transform:scaleX(0.9545);">11</span>
<span style="left:251.50px;top:65.50px;font-size:13.5px;color:#444;transform:scaleX(1.0444);">A</span>
<span style="left:274.20px;top:66.00px;font-size:10.5px;color:#444;transform:scaleX(1.0429);">A</span>
<span style="left:96.81px;top:95.00px;font-size:12.5px;color:#444;font-weight:700;transform:scaleX(0.8875);">B</span>
<span style="left:120.30px;top:94.50px;font-size:13.5px;color:#444;font-weight:700;font-style:italic;font-family:'Liberation Serif', serif;transform:scaleX(1.0500);">I</span>
<span style="left:142.20px;top:95.00px;font-size:12px;color:#444;font-weight:700;transform:scaleX(0.8875);">U</span>
<span style="left:261.60px;top:94.00px;font-size:14px;color:#444;transform:scaleX(0.8800);">A</span>
<span style="left:468.00px;top:57.00px;font-size:11.5px;color:#222;transform:scaleX(0.9550);">General</span>
<span style="left:472.40px;top:79.50px;font-size:17px;color:#555;transform:scaleX(0.7200);">$</span>
<span style="left:503.80px;top:79.50px;font-size:15px;color:#555;transform:scaleX(0.8923);">%</span>
<span style="left:528.20px;top:71.50px;font-size:22px;color:#555;font-weight:700;font-family:'Liberation Serif', serif;transform:scaleX(0.8800);">,</span>
<span style="left:474.86px;top:98.00px;font-size:9px;color:#444;transform:scaleX(0.7429);">.0</span>
<span style="left:468.67px;top:105.00px;font-size:9px;color:#444;transform:scaleX(0.9333);">.00</span>
<span style="left:491.49px;top:98.00px;font-size:9px;color:#444;transform:scaleX(0.9083);">.00</span>
<span style="left:496.10px;top:105.00px;font-size:9px;color:#444;transform:scaleX(0.9000);">.0</span>
<span style="left:573.50px;top:57.00px;font-size:11.5px;color:#2b2b2b;transform:scaleX(1.0687);">Conditional Formatting</span>
<span style="left:572.98px;top:80.00px;font-size:11.5px;color:#2b2b2b;transform:scaleX(1.0247);">Format as Table</span>
<span style="left:574.00px;top:103.00px;font-size:11.5px;color:#2b2b2b;transform:scaleX(0.9630);">Cell Styles</span>
<span style="left:742.80px;top:57.00px;font-size:11.5px;color:#2b2b2b;">Insert</span>
<span style="left:742.80px;top:80.00px;font-size:11.5px;color:#2b2b2b;">Delete</span>
<span style="left:742.78px;top:103.00px;font-size:11.5px;color:#2b2b2b;transform:scaleX(1.0167);">Format</span>
<span style="left:806.85px;top:56.00px;font-size:20px;color:#444;transform:scaleX(1.3455);">Σ</span>
<span style="left:844.40px;top:51.50px;font-size:10px;color:#3d7ec4;font-weight:700;transform:scaleX(0.8000);">A</span>
<span style="left:844.60px;top:60.50px;font-size:10px;color:#8e44ad;font-weight:700;transform:scaleX(0.8667);">Z</span>
<span style="left:13.40px;top:159.00px;font-size:12px;color:#222;transform:scaleX(0.9909);">C20</span>
<span style="left:355.24px;top:146.00px;font-size:26px;color:#5a5a5a;font-weight:700;font-style:italic;font-family:'Liberation Serif', serif;transform:scaleX(1.4400);line-height:44px;padding:0 8px;">f</span>
<span style="left:373.36px;top:157.50px;font-size:22px;color:#5a5a5a;font-weight:700;font-style:italic;font-family:'Liberation Serif', serif;transform:scaleX(0.9091);padding:0 4px;">x</span>
<span style="left:75.70px;top:190.50px;font-size:13.2px;color:#2b2b2b;transform:scaleX(0.8667);">A</span>
<span style="left:219.77px;top:190.50px;font-size:13.2px;color:#2b2b2b;transform:scaleX(0.8286);">B</span>
<span style="left:419.80px;top:190.50px;font-size:13.2px;color:#217346;font-weight:700;transform:scaleX(0.8444);">C</span>
<span style="left:597.89px;top:190.50px;font-size:13.2px;color:#2b2b2b;transform:scaleX(0.9125);">D</span>
<span style="left:690.60px;top:190.50px;font-size:13.2px;color:#2b2b2b;transform:scaleX(0.7000);">E</span>
<span style="left:730.51px;top:190.50px;font-size:13.2px;color:#2b2b2b;transform:scaleX(0.6857);">F</span>
<span style="left:814.60px;top:190.50px;font-size:13.2px;color:#2b2b2b;transform:scaleX(0.7900);">G</span>
<span style="left:10.30px;top:211.50px;font-size:13.2px;color:#2b2b2b;transform:scaleX(0.7000);">1</span>
<span style="left:9.90px;top:231.50px;font-size:13.2px;color:#2b2b2b;transform:scaleX(0.9286);">2</span>
<span style="left:9.90px;top:251.50px;font-size:13.2px;color:#2b2b2b;transform:scaleX(0.9286);">3</span>
<span style="left:9.90px;top:271.50px;font-size:13.2px;color:#2b2b2b;transform:scaleX(0.9286);">4</span>
<span style="left:9.90px;top:291.50px;font-size:13.2px;color:#2b2b2b;transform:scaleX(0.9286);">5</span>
<span style="left:9.90px;top:311.50px;font-size:13.2px;color:#2b2b2b;transform:scaleX(0.9286);">6</span>
<span style="left:9.90px;top:331.50px;font-size:13.2px;color:#2b2b2b;transform:scaleX(0.9286);">7</span>
<span style="left:9.90px;top:351.50px;font-size:13.2px;color:#2b2b2b;transform:scaleX(0.9286);">8</span>
<span style="left:29.40px;top:211.50px;font-size:13.2px;color:#000;font-weight:700;transform:scaleX(0.9430);">AccountCode</span>
<span style="left:133.58px;top:211.50px;font-size:13.2px;color:#000;font-weight:700;transform:scaleX(1.0200);">Name</span>
<span style="left:317.20px;top:211.50px;font-size:13.2px;color:#000;font-weight:700;transform:scaleX(0.9340);">Address</span>
<span style="left:534.30px;top:211.50px;font-size:13.2px;color:#000;font-weight:700;transform:scaleX(0.9360);">City</span>
<span style="left:676.30px;top:211.50px;font-size:13.2px;color:#000;font-weight:700;transform:scaleX(0.9781);">State</span>
<span style="left:715.20px;top:211.50px;font-size:13.2px;color:#000;font-weight:700;transform:scaleX(0.9200);">Zip</span>
<span style="left:757.40px;top:211.50px;font-size:13.2px;color:#000;font-weight:700;transform:scaleX(0.9622);">AccountType</span>
<span style="left:28.45px;top:231.50px;font-size:13.2px;color:#000;transform:scaleX(0.9492);">SMITLTOP</span>
<span style="left:133.55px;top:231.50px;font-size:13.2px;color:#000;transform:scaleX(1.0500);">Smith Family Trust</span>
<span style="left:317.20px;top:231.50px;font-size:13.2px;color:#000;transform:scaleX(1.0477);">875 Montrose Ave.</span>
<span style="left:533.64px;top:231.50px;font-size:13.2px;color:#000;transform:scaleX(1.0562);">Houston</span>
<span style="left:676.30px;top:231.50px;font-size:13.2px;color:#000;transform:scaleX(0.8353);">TX</span>
<span style="left:717.70px;top:231.50px;font-size:13.2px;color:#000;transform:scaleX(0.9216);">77084</span>
<span style="left:757.40px;top:231.50px;font-size:13.2px;color:#000;transform:scaleX(1.0100);">Trust</span>
<span style="left:28.50px;top:251.50px;font-size:13.2px;color:#000;transform:scaleX(0.9014);">BARKOPST</span>
<span style="left:133.57px;top:251.50px;font-size:13.2px;color:#000;transform:scaleX(1.0330);">Kevin Barksdale</span>
<span style="left:317.20px;top:251.50px;font-size:13.2px;color:#000;transform:scaleX(1.0165);">2314 Paseo del Norte</span>
<span style="left:533.30px;top:251.50px;font-size:13.2px;color:#000;">San Diego</span>
<span style="left:676.30px;top:251.50px;font-size:13.2px;color:#000;transform:scaleX(0.8667);">CA</span>
<span style="left:717.30px;top:251.50px;font-size:13.2px;color:#000;transform:scaleX(0.9857);">92110</span>
<span style="left:756.93px;top:251.50px;font-size:13.2px;color:#000;transform:scaleX(1.0714);">Individual Asset</span>
<span style="left:28.45px;top:271.50px;font-size:13.2px;color:#000;transform:scaleX(0.9491);">KITMLLLI</span>
<span style="left:133.54px;top:271.50px;font-size:13.2px;color:#000;transform:scaleX(1.0580);">Kitchener Trust</span>
<span style="left:317.20px;top:271.50px;font-size:13.2px;color:#000;transform:scaleX(0.9672);">497 Gin Ln.</span>
<span style="left:533.22px;top:271.50px;font-size:13.2px;color:#000;transform:scaleX(1.0792);">Southampton</span>
<span style="left:675.77px;top:271.50px;font-size:13.2px;color:#000;transform:scaleX(0.9294);">NY</span>
<span style="left:717.01px;top:271.50px;font-size:13.2px;color:#000;transform:scaleX(0.9941);">11968</span>
<span style="left:757.40px;top:271.50px;font-size:13.2px;color:#000;transform:scaleX(1.0100);">Trust</span>
<span style="left:28.42px;top:291.50px;font-size:13.2px;color:#000;transform:scaleX(0.9849);">RKIMIIIG</span>
<span style="left:133.58px;top:291.50px;font-size:13.2px;color:#000;transform:scaleX(1.0162);">Richard King</span>
<span style="left:317.20px;top:291.50px;font-size:13.2px;color:#000;">299 Rametto Rd.</span>
<span style="left:533.31px;top:291.50px;font-size:13.2px;color:#000;transform:scaleX(0.9893);">Santa Barbara</span>
<span style="left:676.30px;top:291.50px;font-size:13.2px;color:#000;transform:scaleX(0.8667);">CA</span>
<span style="left:717.30px;top:291.50px;font-size:13.2px;color:#000;transform:scaleX(0.9583);">93108</span>
<span style="left:756.93px;top:291.50px;font-size:13.2px;color:#000;transform:scaleX(1.0714);">Individual Asset</span>
<span style="left:28.45px;top:311.50px;font-size:13.2px;color:#000;transform:scaleX(0.9467);">ITALSLNV</span>
<span style="left:133.55px;top:311.50px;font-size:13.2px;color:#000;transform:scaleX(1.0520);">Ivan Talosian</span>
<span style="left:316.60px;top:311.50px;font-size:13.2px;color:#000;">11143 Pine Cone Cir</span>
<span style="left:533.62px;top:311.50px;font-size:13.2px;color:#000;transform:scaleX(1.0825);">Incline Village</span>
<span style="left:675.66px;top:311.50px;font-size:13.2px;color:#000;transform:scaleX(1.0412);">NV</span>
<span style="left:717.30px;top:311.50px;font-size:13.2px;color:#000;transform:scaleX(0.9583);">89451</span>
<span style="left:756.93px;top:311.50px;font-size:13.2px;color:#000;transform:scaleX(1.0714);">Individual Asset</span>
<span style="left:29.00px;top:331.50px;font-size:13.2px;color:#000;transform:scaleX(0.9559);">ARKNIHJI</span>
<span style="left:134.20px;top:331.50px;font-size:13.2px;color:#000;transform:scaleX(1.0874);">Arkham Institute</span>
<span style="left:317.20px;top:331.50px;font-size:13.2px;color:#000;transform:scaleX(0.9789);">9927 Renaissance Pkwy NE</span>
<span style="left:534.30px;top:331.50px;font-size:13.2px;color:#000;transform:scaleX(1.0780);">Atlanta</span>
<span style="left:676.30px;top:331.50px;font-size:13.2px;color:#000;transform:scaleX(0.9000);">GA</span>
<span style="left:717.30px;top:331.50px;font-size:13.2px;color:#000;transform:scaleX(0.9583);">30308</span>
<span style="left:756.91px;top:331.50px;font-size:13.2px;color:#000;transform:scaleX(1.0880);">Institutional Assets</span>
<span style="left:114.11px;top:373.00px;font-size:12.5px;color:#2b2b2b;transform:scaleX(1.0882);">Portfolios</span>
<span style="left:201.50px;top:373.00px;font-size:12.5px;color:#2b2b2b;transform:scaleX(1.0194);">TransactionTypes</span>
<span style="left:330.50px;top:373.00px;font-size:12.5px;color:#217346;font-weight:700;transform:scaleX(1.0431);">ClientInfo</span>
<span style="left:8.18px;top:398.00px;font-size:11.5px;color:#f0f0f0;transform:scaleX(0.8179);">READY</span>
<span style="left:862.28px;top:398.00px;font-size:11.5px;color:#f0f0f0;transform:scaleX(0.9214);">100%</span>
<div style="left:314px;top:211px;width:218px;height:2px;background:#217346;"></div>
<div style="left:0px;top:0px;width:910px;height:1px;background:#3f3f3f;"></div>
<div style="left:0px;top:0px;width:1px;height:422px;background:#3f3f3f;"></div>
<div style="left:909px;top:0px;width:1px;height:422px;background:#3f3f3f;"></div>
</body></html>
